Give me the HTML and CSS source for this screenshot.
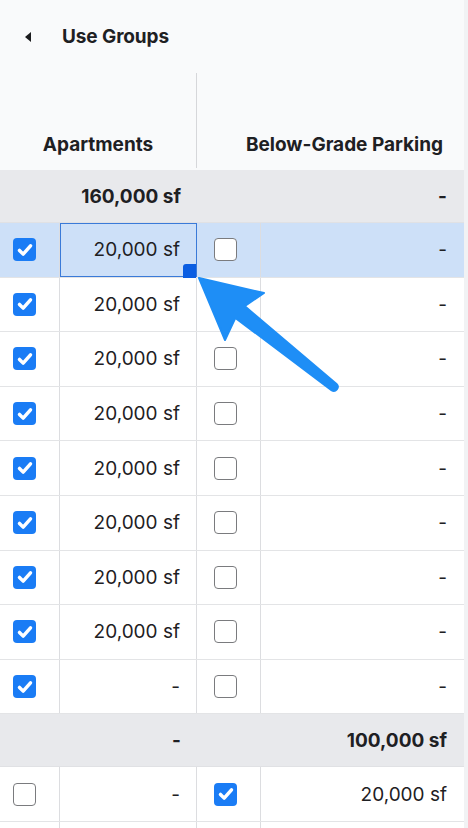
FILE: index.html
```html
<!DOCTYPE html>
<html>
<head>
<meta charset="utf-8">
<link rel="stylesheet" href="styles.css">
</head>
<body>
<div class="page">
  <div class="table">
    <div class="head">
      <div class="title-bar">
        <span class="caret"></span>
        <span class="title">Use Groups</span>
      </div>
      <div class="col-heads">
        <div class="col-head first">Apartments</div>
        <div class="col-head second">Below-Grade Parking</div>
      </div>
    </div>

    <div class="row summary">
      <div class="cell span2 num bold">160,000 sf</div>
      <div class="cell span2b num bold">-</div>
    </div>

    <div class="row selected">
      <div class="cell c1"><span class="cb on"><svg viewBox="0 0 24 24"><path d="M6 12.5l4 4 8-9" /></svg></span></div>
      <div class="cell c2 num active">20,000 sf<span class="handle"></span></div>
      <div class="cell c3"><span class="cb"></span></div>
      <div class="cell c4 num">-</div>
    </div>
    <div class="row">
      <div class="cell c1"><span class="cb on"><svg viewBox="0 0 24 24"><path d="M6 12.5l4 4 8-9" /></svg></span></div>
      <div class="cell c2 num">20,000 sf</div>
      <div class="cell c3"><span class="cb"></span></div>
      <div class="cell c4 num">-</div>
    </div>
    <div class="row">
      <div class="cell c1"><span class="cb on"><svg viewBox="0 0 24 24"><path d="M6 12.5l4 4 8-9" /></svg></span></div>
      <div class="cell c2 num">20,000 sf</div>
      <div class="cell c3"><span class="cb"></span></div>
      <div class="cell c4 num">-</div>
    </div>
    <div class="row">
      <div class="cell c1"><span class="cb on"><svg viewBox="0 0 24 24"><path d="M6 12.5l4 4 8-9" /></svg></span></div>
      <div class="cell c2 num">20,000 sf</div>
      <div class="cell c3"><span class="cb"></span></div>
      <div class="cell c4 num">-</div>
    </div>
    <div class="row">
      <div class="cell c1"><span class="cb on"><svg viewBox="0 0 24 24"><path d="M6 12.5l4 4 8-9" /></svg></span></div>
      <div class="cell c2 num">20,000 sf</div>
      <div class="cell c3"><span class="cb"></span></div>
      <div class="cell c4 num">-</div>
    </div>
    <div class="row">
      <div class="cell c1"><span class="cb on"><svg viewBox="0 0 24 24"><path d="M6 12.5l4 4 8-9" /></svg></span></div>
      <div class="cell c2 num">20,000 sf</div>
      <div class="cell c3"><span class="cb"></span></div>
      <div class="cell c4 num">-</div>
    </div>
    <div class="row">
      <div class="cell c1"><span class="cb on"><svg viewBox="0 0 24 24"><path d="M6 12.5l4 4 8-9" /></svg></span></div>
      <div class="cell c2 num">20,000 sf</div>
      <div class="cell c3"><span class="cb"></span></div>
      <div class="cell c4 num">-</div>
    </div>
    <div class="row">
      <div class="cell c1"><span class="cb on"><svg viewBox="0 0 24 24"><path d="M6 12.5l4 4 8-9" /></svg></span></div>
      <div class="cell c2 num">20,000 sf</div>
      <div class="cell c3"><span class="cb"></span></div>
      <div class="cell c4 num">-</div>
    </div>
    <div class="row">
      <div class="cell c1"><span class="cb on"><svg viewBox="0 0 24 24"><path d="M6 12.5l4 4 8-9" /></svg></span></div>
      <div class="cell c2 num">-</div>
      <div class="cell c3"><span class="cb"></span></div>
      <div class="cell c4 num">-</div>
    </div>

    <div class="row summary">
      <div class="cell span2 num bold">-</div>
      <div class="cell span2b num bold">100,000 sf</div>
    </div>

    <div class="row">
      <div class="cell c1"><span class="cb"></span></div>
      <div class="cell c2 num">-</div>
      <div class="cell c3"><span class="cb on"><svg viewBox="0 0 24 24"><path d="M6 12.5l4 4 8-9" /></svg></span></div>
      <div class="cell c4 num">20,000 sf</div>
    </div>
    <div class="row">
      <div class="cell c1"></div>
      <div class="cell c2"></div>
      <div class="cell c3"></div>
      <div class="cell c4"></div>
    </div>
  </div>
  <div class="scroll-track"></div>

  <svg class="callout" width="468" height="828" viewBox="0 0 468 828">
    <path d="M199,278 L264,293 L244.6,306.1 L336.5,383.9 A4,4 0 0 1 331.5,390.1 L235.4,317.9 L225,340 Z" />
  </svg>
</div>
</body>
</html>
```

FILE: styles.css
```css
* { box-sizing: border-box; }
html, body {
  margin: 0;
  padding: 0;
  background: #ffffff;
}
body {
  font-family: Inter, "Noto Sans", "Liberation Sans", sans-serif;
  color: #1e2023;
  width: 468px;
  height: 828px;
  overflow: hidden;
}
.page {
  position: relative;
  display: flex;
  width: 468px;
  height: 828px;
  overflow: hidden;
}
.table {
  width: 464px;
  flex: none;
  display: flex;
  flex-direction: column;
}
.scroll-track {
  flex: 1;
  background: #f1f2f4;
}

/* header */
.head {
  background: #f9fafb;
  height: 170px;
  flex: none;
  display: flex;
  flex-direction: column;
}
.title-bar {
  height: 73px;
  display: flex;
  align-items: center;
  padding-left: 25px;
}
.caret {
  width: 0;
  height: 0;
  border-top: 5px solid transparent;
  border-bottom: 5px solid transparent;
  border-right: 6px solid #1b1c1e;
  margin-right: 31px;
}
.title {
  font-size: 19px;
  font-weight: 700;
  letter-spacing: -0.1px;
}
.col-heads {
  flex: 1;
  display: flex;
  padding-bottom: 2px;
}
.col-head {
  display: flex;
  align-items: flex-end;
  justify-content: center;
  padding-bottom: 12px;
  font-size: 19px;
  font-weight: 700;
  line-height: 22px;
}
.col-head.first {
  width: 197px;
  border-right: 1px solid #d6d7da;
}
.col-head.second {
  flex: 1;
  padding-left: 28px;
}

/* rows */
.row {
  display: flex;
  height: 54.6px;
  flex: none;
  border-bottom: 1px solid #e3e4e6;
  background: #ffffff;
}
.row.summary {
  background: #e8e9ec;
  height: 53px;
  border-bottom: 1px solid #e0e1e4;
}
.row.selected {
  background: #cde0f8;
}
.cell {
  display: flex;
  align-items: center;
  height: 100%;
}
.c1 {
  width: 60px;
  padding-left: 13px;
  border-right: 1px solid #dcdde0;
}
.c2 {
  width: 137px;
  border-right: 1px solid #dcdde0;
}
.c3 {
  width: 64px;
  padding-left: 17px;
  border-right: 1px solid #dcdde0;
}
.c4 {
  flex: 1;
}
.span2 { width: 197px; }
.span2b { flex: 1; }
.num {
  justify-content: flex-end;
  padding-right: 16px;
  font-size: 19px;
  font-weight: 400;
}
.c4.num, .span2b.num { padding-right: 17px; }
.bold { font-weight: 700; }

.active {
  position: relative;
  outline: 1px solid #3a7ad8;
  outline-offset: -1px;
}
.handle {
  position: absolute;
  right: 0;
  bottom: -1px;
  width: 13px;
  height: 14px;
  background: #0b5ee2;
  border-top-left-radius: 3px;
}

/* checkboxes */
.cb {
  width: 23px;
  height: 23px;
  border-radius: 4px;
  border: 1.5px solid #7a7b7e;
  background: #ffffff;
  display: flex;
  align-items: center;
  justify-content: center;
}
.cb.on {
  border: none;
  background: #1a7cf5;
}
.cb svg {
  width: 22px;
  height: 22px;
  fill: none;
  stroke: #ffffff;
  stroke-width: 3.8;
  stroke-linecap: round;
  stroke-linejoin: round;
}

/* arrow callout */
.callout {
  position: absolute;
  left: 0;
  top: 0;
  pointer-events: none;
}
.callout path {
  fill: #1e8ef6;
  stroke: #1e8ef6;
  stroke-width: 2;
  stroke-linejoin: round;
}
```
